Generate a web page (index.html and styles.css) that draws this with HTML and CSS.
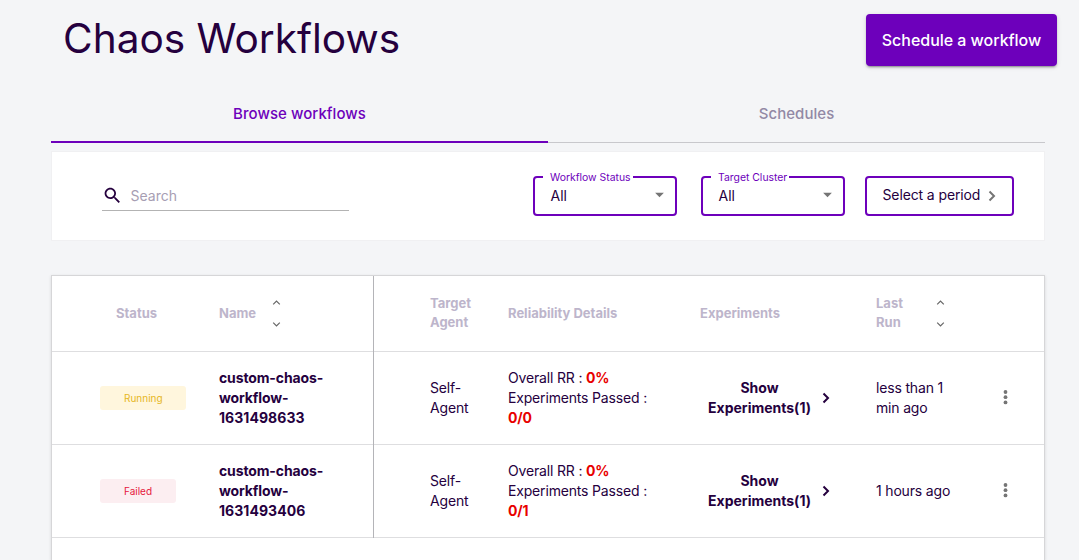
FILE: index.html
```html
<!DOCTYPE html>
<html lang="en">
<head>
<meta charset="utf-8">
<title>Chaos Workflows</title>
<link rel="stylesheet" href="styles.css">
</head>
<body>
<main class="page">
  <header class="header">
    <h1 class="title">Chaos Workflows</h1>
    <button class="primary">Schedule a workflow</button>
  </header>
  <nav class="tabs">
    <a class="tab tab-active">Browse workflows</a>
    <a class="tab">Schedules</a>
  </nav>
  <section class="filters">
    <div class="search">
      <svg class="search-icon" viewBox="0 0 24 24"><path d="M15.5 14h-.79l-.28-.27C15.41 12.59 16 11.11 16 9.5 16 5.91 13.09 3 9.5 3S3 5.91 3 9.5 5.91 16 9.5 16c1.61 0 3.09-.59 4.23-1.57l.27.28v.79l5 4.99L20.49 19l-4.99-5zm-6 0C7.01 14 5 11.99 5 9.5S7.01 5 9.5 5 14 7.01 14 9.5 11.99 14 9.5 14z"/></svg>
      <span class="placeholder">Search</span>
    </div>
    <fieldset class="select">
      <legend class="legend">Workflow Status</legend>
      <span class="value">All</span>
      <svg class="caret" viewBox="0 0 24 24"><path d="M7 10l5 5 5-5z"/></svg>
    </fieldset>
    <fieldset class="select">
      <legend class="legend">Target Cluster</legend>
      <span class="value">All</span>
      <svg class="caret" viewBox="0 0 24 24"><path d="M7 10l5 5 5-5z"/></svg>
    </fieldset>
    <button class="period"><span>Select a period</span><svg class="period-icon" viewBox="0 0 8 12"><path d="M1.500 1.500L6 6l-4.500 4.500"/></svg></button>
  </section>
  <section class="table">
    <div class="row head">
      <div class="cell status">Status</div>
      <div class="cell name"><span class="name-label">Name</span>
        <div class="sort"><svg viewBox="0 0 8 5"><path d="M.7 4.300L4 1l3.300 3.300"/></svg><svg viewBox="0 0 8 5"><path d="M.7.7L4 4 7.300.7"/></svg></div>
      </div>
      <div class="cell agent">Target<br>Agent</div>
      <div class="cell">Reliability Details</div>
      <div class="cell">Experiments</div>
      <div class="cell last"><span class="last-label">Last<br>Run</span>
        <div class="sort"><svg viewBox="0 0 8 5"><path d="M.7 4.300L4 1l3.300 3.300"/></svg><svg viewBox="0 0 8 5"><path d="M.7.7L4 4 7.300.7"/></svg></div>
      </div>
      <div class="cell"></div>
    </div>
    <div class="row">
      <div class="cell status"><span class="chip running">Running</span></div>
      <div class="cell name"><div>custom-chaos-<br>workflow-<br><span class="digits">1631498633</span></div></div>
      <div class="cell agent">Self-<br>Agent</div>
      <div class="cell"><div>Overall RR : <b class="bad">0%</b><br>Experiments Passed :<br><b class="bad">0/0</b></div></div>
      <div class="cell show"><span class="show-label">Show<br>Experiments(1)</span><svg class="show-icon" viewBox="0 0 8 12"><path d="M1.500 1.500L6 6l-4.500 4.500"/></svg></div>
      <div class="cell">less than 1<br>min ago</div>
      <div class="cell"><svg class="dots" viewBox="0 0 5 15"><circle cx="2.500" cy="2" r="1.900"/><circle cx="2.500" cy="7.200" r="1.900"/><circle cx="2.500" cy="12.400" r="1.900"/></svg></div>
    </div>
    <div class="row">
      <div class="cell status"><span class="chip failed">Failed</span></div>
      <div class="cell name"><div>custom-chaos-<br>workflow-<br><span class="digits">1631493406</span></div></div>
      <div class="cell agent">Self-<br>Agent</div>
      <div class="cell"><div>Overall RR : <b class="bad">0%</b><br>Experiments Passed :<br><b class="bad">0/1</b></div></div>
      <div class="cell show"><span class="show-label">Show<br>Experiments(1)</span><svg class="show-icon" viewBox="0 0 8 12"><path d="M1.500 1.500L6 6l-4.500 4.500"/></svg></div>
      <div class="cell">1 hours ago</div>
      <div class="cell"><svg class="dots" viewBox="0 0 5 15"><circle cx="2.500" cy="2" r="1.900"/><circle cx="2.500" cy="7.200" r="1.900"/><circle cx="2.500" cy="12.400" r="1.900"/></svg></div>
    </div>
  </section>
</main>
</body>
</html>
```
FILE: styles.css
```css
* { box-sizing: border-box; }
body {
  margin: 0;
  height: 560px;
  overflow: hidden;
  background: #f4f5f7;
  color: #25003e;
  font: 14px/20px Inter, "Liberation Sans", sans-serif;
}
button { font-family: inherit; color: inherit; }
.page { padding: 14px 22px 0 51px; }
.header { display: flex; justify-content: space-between; height: 70px; padding-left: 12px; }
.title { margin: 0; font-size: 40.6px; line-height: 49px; font-weight: 400; }
.primary {
  width: 191px;
  height: 52px;
  padding: 0;
  border: 0;
  border-radius: 4px;
  background: #6d00bb;
  color: #fff;
  font-size: 16px;
  font-weight: 500;
  letter-spacing: -.03px;
  box-shadow: 0 3px 1px -2px rgba(0,0,0,.2), 0 2px 2px rgba(0,0,0,.14), 0 1px 5px rgba(0,0,0,.12);
}
.tabs { display: flex; width: 994px; height: 59px; }
.tab {
  flex: 1;
  border-bottom: 1px solid #c8c8cc;
  height: 59px;
  color: #9289a5;
  font-size: 15px;
  font-weight: 500;
  letter-spacing: .05px;
  line-height: 60px;
  text-align: center;
}
.tab-active { border-bottom: 2px solid #6d00bb; color: #6d00bb; }
.filters {
  display: flex;
  width: 994px;
  height: 90px;
  margin-top: 8px;
  padding: 0 30px 0 50px;
  background: #fff;
  border: 1px solid #f0f0f2;
}
.search {
  display: flex;
  align-items: center;
  width: 247px;
  height: 30px;
  margin: 29px 184px 0 0;
  border-bottom: 1px solid #b3b3b3;
}
.search-icon { width: 21px; height: 21px; fill: #25003e; }
.placeholder { margin-left: 7.5px; color: #a79eb3; }
.select {
  display: flex;
  width: 144px;
  height: 46px;
  margin: 18px 24px 0 0;
  padding: 0 5px 0 8px;
  border: 2px solid #6d00bb;
  border-radius: 4px;
}
.select + .period { margin-left: -4px; }
.legend { height: 14px; padding: 0 2px 0 7px; color: #6d00bb; font-size: 10.4px; line-height: 15px; }
.value { flex: 1; padding: 2px 0 0 7.5px; }
.caret { width: 21px; height: 21px; fill: #757575; }
.period {
  display: flex;
  align-items: center;
  width: 149px;
  height: 40px;
  margin-top: 24px;
  padding: 0 0 2px 15.5px;
  border: 2px solid #6d00bb;
  border-radius: 4px;
  background: #fff;
  font-size: 14px;
  line-height: 18px;
  letter-spacing: -.12px;
}
.period-icon { width: 8px; height: 12px; margin: 2px 0 0 8px; fill: none; stroke: #757575; stroke-width: 2; }
.table {
  width: 994px;
  height: 285px;
  margin-top: 34px;
  border: 1px solid #d6d6d8;
  border-bottom: 0;
  background: #fff;
  box-shadow: 0 1px 3px rgba(0,0,0,.12);
}
.row {
  display: grid;
  grid-template-columns: 167px 155px 134px 192px 176px 127px 1fr;
  height: 93px;
  border-bottom: 1px solid #dedee0;
  letter-spacing: -.17px;
}
.cell { display: flex; align-items: center; }
.status { padding-left: 48px; }
.name { border-right: 1px solid #b4b4b8; font-weight: 700; margin-bottom: -1px; padding-bottom: 1px; letter-spacing: -.13px; }
.digits { letter-spacing: .06px; }
.agent { padding-left: 56px; }
.head { height: 76px; color: #bdb5cb; font-size: 13px; line-height: 19px; font-weight: 700; letter-spacing: 0; }
.head .name { letter-spacing: 0; padding-bottom: 2px; }
.head .status { padding-left: 64px; }
.head .agent, .head .last { padding-bottom: 1px; }
.name-label { width: 53px; }
.last-label { width: 60px; }
.sort { display: flex; flex-direction: column; gap: 17px; }
.sort svg { width: 9px; height: 5px; fill: none; stroke: #666; stroke-width: 1.2; }
.chip { width: 86px; height: 24px; padding-left: 24px; border-radius: 3px; font-size: 10px; line-height: 25px; letter-spacing: 0; }
.running { background: #fff6dd; color: #e6b71e; }
.failed { width: 76px; background: #fceef1; color: #e5163c; }
.bad { color: #e80000; }
.show { padding-left: 8px; font-weight: 700; letter-spacing: 0; }
.show-label { width: 103px; text-align: center; }
.show-icon { width: 8px; height: 12px; margin-left: 11px; fill: none; stroke: #25003e; stroke-width: 2; }
.dots { width: 5px; height: 15px; margin-bottom: 1px; fill: #757575; }
```
